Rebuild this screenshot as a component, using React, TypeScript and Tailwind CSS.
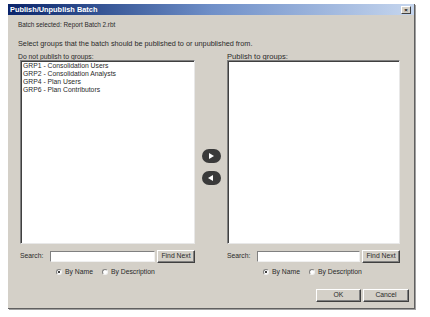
import React from 'react';

const groups = [
  'GRP1 - Consolidation Users',
  'GRP2 - Consolidation Analysts',
  'GRP4 - Plan Users',
  'GRP6 - Plan Contributors',
];

function Radio({ checked, label }: { checked?: boolean; label: string }) {
  return (
    <div className="flex items-center gap-[3px]">
      <span className="w-[6px] h-[6px] rounded-full bg-white border border-t-[#808080] border-l-[#808080] border-r-[#f0f0f0] border-b-[#f0f0f0] flex items-center justify-center">
        {checked && <span className="w-[2px] h-[2px] rounded-full bg-black" />}
      </span>
      <span>{label}</span>
    </div>
  );
}

function Button({ label, className }: { label: string; className?: string }) {
  return (
    <div
      className={
        'h-[13px] flex items-center justify-center bg-[#d4d0c8] border border-t-white border-l-white border-r-[#404040] border-b-[#404040] shadow-[inset_-1px_-1px_0_#808080] ' +
        (className ?? '')
      }
    >
      {label}
    </div>
  );
}

function GroupPane({ title, items, titleClass }: { title: string; items: string[]; titleClass?: string }) {
  return (
    <div className="flex flex-col flex-1 min-w-0">
      <div className={'h-[6px] flex items-center ' + (titleClass ?? '-ml-[2px]')}>{title}</div>
      <div className="h-[184px] bg-white border border-t-[#808080] border-l-[#808080] border-r-[#e8e8e8] border-b-[#e8e8e8] shadow-[inset_1px_1px_0_#404040] pl-[2px] pt-[1px] leading-[8px]">
        {items.map((g) => (
          <div key={g}>{g}</div>
        ))}
      </div>
      <div className="flex items-center mt-[6px] h-[13px]">
        <span className="w-[30px]">Search:</span>
        <div className="flex-1 h-[11px] bg-white border border-t-[#808080] border-l-[#808080] border-r-[#f0f0f0] border-b-[#f0f0f0]" />
        <Button label="Find Next" className="w-[38px] ml-[2px]" />
      </div>
      <div className="flex items-center gap-[9px] mt-[6px] pl-[36px]">
        <Radio checked label="By Name" />
        <Radio label="By Description" />
      </div>
    </div>
  );
}

function ArrowButton({ dir }: { dir: 'right' | 'left' }) {
  return (
    <div className="w-[19px] h-[14px] rounded-full bg-[#3a3a3a] flex items-center justify-center">
      <svg width="8" height="8" viewBox="0 0 8 8">
        {dir === 'right' ? (
          <polygon points="2,1 7,4 2,7" fill="white" />
        ) : (
          <polygon points="6,1 1,4 6,7" fill="white" />
        )}
      </svg>
    </div>
  );
}

export default function App() {
  return (
    <div
      className="w-[430px] h-[317px] bg-white pl-[8px] pt-[4px] text-[6.8px] text-[#2a2a2a] leading-none"
      style={{ fontFamily: '"Liberation Sans", Arial, sans-serif' }}
    >
      <div className="w-[407px] h-[305px] bg-[#d4d0c8] flex flex-col border-r border-b border-r-[#606060] border-b-[#606060] shadow-[1px_1px_0_#a0a0a0]">
        {/* Title bar */}
        <div className="h-[11px] shrink-0 flex items-center justify-between pl-[2px] pr-[3px] bg-gradient-to-r from-[#0a246a] via-[#6f8fc8] to-[#c6d6ee]">
          <span className="text-white font-bold text-[7.4px]">Publish/Unpublish Batch</span>
          <div className="w-[10px] h-[8px] bg-[#d4d0c8] border border-t-white border-l-white border-r-[#404040] border-b-[#404040] flex items-center justify-center text-[6px] font-bold text-black">
            ×
          </div>
        </div>

        <div className="flex flex-col flex-1 pl-[12px] pr-[14px]">
          <div className="h-[7px] mt-[7px] -ml-[2px] text-[6.4px]">Batch selected: Report Batch 2.rbt</div>
          <div className="h-[7px] mt-[11px] -ml-[2px] text-[7.3px]">
            Select groups that the batch should be published to or unpublished from.
          </div>

          <div className="flex mt-[7px]">
            <GroupPane title="Do not publish to groups:" items={groups} />
            <div className="w-[32px] shrink-0 flex flex-col items-center pt-[95px] gap-[8px]">
              <ArrowButton dir="right" />
              <ArrowButton dir="left" />
            </div>
            <div className="w-[173px] shrink-0 flex">
              <GroupPane title="Publish to groups:" items={[]} titleClass="text-[7.6px]" />
            </div>
          </div>

          <div className="flex justify-end gap-[2px] mt-[13px] -mr-[9px]">
            <Button label="OK" className="w-[45px]" />
            <Button label="Cancel" className="w-[46px]" />
          </div>
        </div>
      </div>
    </div>
  );
}
